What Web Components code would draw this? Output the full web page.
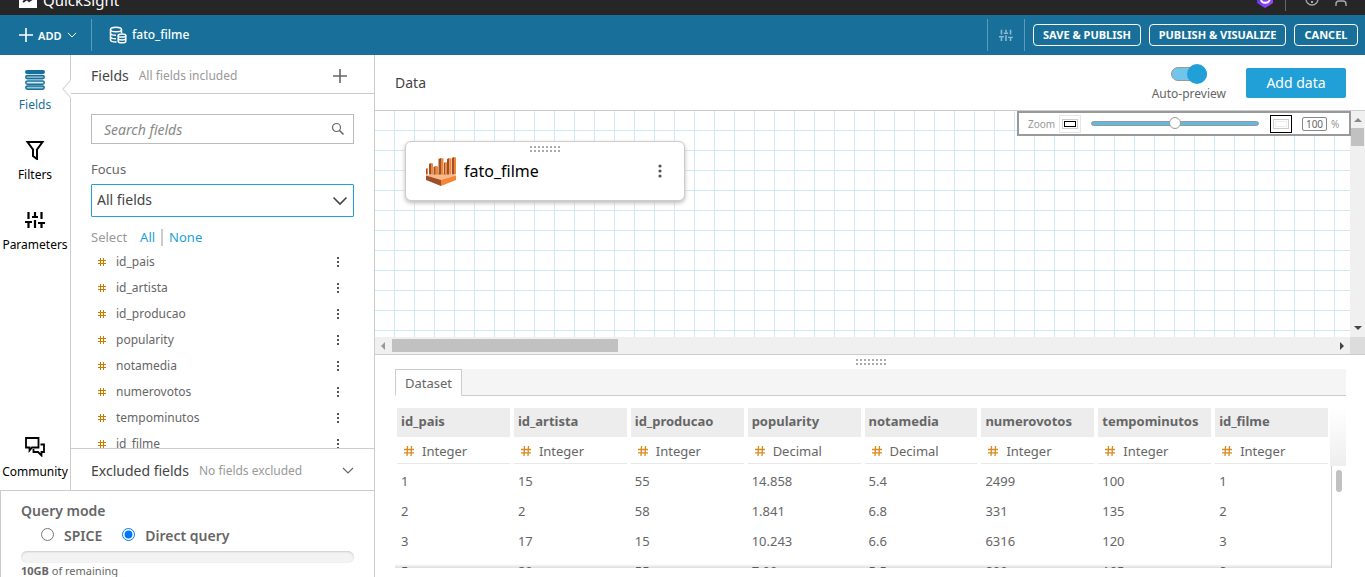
<!DOCTYPE html>
<html lang="en">
<head>
<meta charset="utf-8">
<title>QuickSight - fato_filme</title>
<style>
  html, body { margin: 0; height: 100%; }
  body { font-family: "Noto Sans", "Open Sans", sans-serif; font-size: 13px; color: #666; background: #fff; overflow: hidden; }
</style>
</head>
<body>
<qs-app></qs-app>
<script>
const define = (name, html, setup) => {
  const template = document.createElement('template');
  template.innerHTML = '<style>*{box-sizing:border-box}button,input,select{font:inherit;color:inherit;margin:0}button{background:none;border:0;padding:0;cursor:pointer}</style>' + html;
  customElements.define(name, class extends HTMLElement {
    constructor() {
      super();
      this.attachShadow({ mode: 'open' }).append(template.content.cloneNode(true));
    }
    connectedCallback() {
      if (setup && !this.ready) { this.ready = true; setup(this, this.shadowRoot); }
    }
  });
};

const line = (w, body) => `<g fill="none" stroke="currentColor" stroke-width="${w}">${body}</g>`;
const dots = (() => {
  let s = '';
  for (let r = 0; r < 2; r++) for (let c = 0; c < 8; c++) s += `<rect x="${c * 4}" y="${r * 4}" width="2" height="2"/>`;
  return `<g fill="currentColor">${s}</g>`;
})();
const ICONS = {
  logo: [18, 18, '<rect width="18" height="18" fill="#fff"/><path d="M4 12l4-3 2 2 5-3" fill="none" stroke="#262626" stroke-width="2"/>'],
  hex: [16, 18, '<defs><linearGradient id="g" x1="0" x2="1" y1="0" y2="1"><stop stop-color="#4b2be0"/><stop offset="1" stop-color="#a64dff"/></linearGradient></defs><path d="M8 0 16 4v9l-8 5-8-5V4z" fill="url(#g)"/><path d="M4 9c0 5 8 5 9 0H8" fill="none" stroke="#fff" stroke-width="1.8"/>'],
  help: [14, 14, line(1.3, '<circle cx="7" cy="7" r="6"/>') + '<rect x="6" y="9" width="2" height="2" fill="currentColor"/>'],
  user: [12, 14, line(1.4, '<circle cx="6" cy="4" r="3"/><path d="M1 14v-2q0-3 3-3h4q3 0 3 3v2"/>')],
  plus: [14, 14, line(1.6, '<path d="M7 0v14M0 7h14"/>')],
  chev: [12, 8, line(1.2, '<path d="M1 1l5 5 5-5"/>')],
  chevBig: [16, 10, line(1.6, '<path d="M1.5 1.5 8 8l6.500-6.500"/>')],
  db: [18, 18, line(1.5, '<ellipse cx="7" cy="3.5" rx="5.5" ry="2.3"/><path d="M1.5 3.5V14c0 1 2 2 6 2M1.5 7c0 1.500 2.500 2.300 5.500 2.300M1.500 10.500c0 1.500 2.500 2.300 5.500 2.300M12.500 3.500V7"/><ellipse cx="13" cy="9.500" rx="3.800" ry="1.600"/><path d="M9.200 9.500v5.700c0 2.200 7.600 2.200 7.600 0V9.500M9.200 12.300c0 2.200 7.600 2.200 7.600 0"/>')],
  sliders: [20, 18, line(2.2, '<path d="M3.5 1v7M3.5 12v5M10 1v4M10 9v8M16.5 1v7M16.5 13v4"/><path stroke-width="2" d="M0 11h7M7 6h6M13 12h7"/>')],
  fields: [20, 20, '<rect y="0" width="20" height="4" rx="2" fill="#16709a"/>' + [[5, '#7fb2cb'], [10.5, '#d5e8f0'], [15.5, '#9bc2d6']].map(([y, f]) => `<rect x=".8" y="${y + .5}" width="18.4" height="3.2" rx="1.6" fill="${f}" stroke="#16709a" stroke-width="1.5"/>`).join('')],
  funnel: [20, 20, line(2, '<path d="M2.5 2h15L12 9.5V19l-4-3V9.5z"/>')],
  chat: [20, 20, line(1.8, '<path d="M1 1h12.500v9.500H7L4.500 13.500v-3H1z"/><path d="M15.500 7.500H19V15h-2.500v3.500L13 15H8.500v-3"/>')],
  search: [14, 14, line(1.2, '<circle cx="5.5" cy="5.5" r="4"/><path stroke-width="1.6" d="M8.500 8.500l4 4"/>')],
  hash: [8, 8, line(1, '<path d="M2.5 0v8M5.5 0v8M0 2.5h8M0 5.5h8"/>')],
  hashBig: [10, 10, line(1.3, '<path d="M3.5 0 3 10M7.500 0 7 10M0 3.500h10M0 6.800h10"/>')],
  more: [2, 10, '<g fill="currentColor"><rect width="2" height="2"/><rect y="4" width="2" height="2"/><rect y="8" width="2" height="2"/></g>'],
  moreRound: [4, 14, '<g fill="currentColor"><circle cx="2" cy="2" r="1.600"/><circle cx="2" cy="7" r="1.600"/><circle cx="2" cy="12" r="1.600"/></g>'],
  notch: [9, 18, '<path d="M9 0v18L0 9z" fill="#fff"/>' + line(1.2, '<path d="M8.500 0.500 .8 9l7.700 8.500"/>')],
  grip: [30, 6, dots],
  up: [8, 4, '<path d="M0 4l4-4 4 4z" fill="currentColor"/>'],
  down: [8, 4, '<path d="M0 0l4 4 4-4z" fill="currentColor"/>'],
  left: [4, 8, '<path d="M4 0L0 4l4 4z" fill="currentColor"/>'],
  right: [4, 8, '<path d="M0 0l4 4-4 4z" fill="currentColor"/>'],
  redshift: [30, 29, '<path d="M0 18.500l15-3 15 3-15 5z" fill="#f9b88b"/><path d="M0 18.500l15 4.500v6L0 23z" fill="#9d5025"/><path d="M30 18.500l-15 4.500v6l15-6z" fill="#f58536"/>' +
    [[0, 11, 2], [3, 6, 4], [7.5, 9, 4.5], [12.5, 1, 5], [18, 5, 3], [21, 1, 4.5], [26, 0, 4]].map(([x, y, w]) => `<path d="M${x} ${y + 1}l${w / 2}-1v${17.5 - y}h-${w / 2}z" fill="#9d5025"/><path d="M${x + w / 2} ${y}l${w / 2} .6v${16.9 - y}h-${w / 2}z" fill="#f58536"/>`).join('')]
};

customElements.define('qs-icon', class extends HTMLElement {
  static observedAttributes = ['name'];
  constructor() { super(); this.attachShadow({ mode: 'open' }); }
  attributeChangedCallback() {
    const [w, h, body] = ICONS[this.getAttribute('name')];
    const width = Number(this.getAttribute('size')) || w;
    this.shadowRoot.innerHTML = `<style>:host{display:inline-block;flex:none;line-height:0}svg{display:block}</style><svg width="${width}" height="${width * h / w}" viewBox="0 0 ${w} ${h}" aria-hidden="true">${body}</svg>`;
  }
});

define('qs-masthead', `
<style>
  :host { display: flex; flex: none; height: 15px; overflow: hidden; align-items: flex-end; justify-content: space-between; background: #262626; color: #fff; padding: 0 18px 0 19px; }
  .brand, .tools { display: flex; align-items: flex-end; }
  .brand { gap: 6px; font-size: 15px; line-height: 20px; padding-bottom: 5px; }
  .brand qs-icon { margin-bottom: 2px; }
  .tools { color: #aaa; padding-bottom: 7px; }
  .rule { width: 1px; height: 20px; background: #666; margin: 0 19px -3px 12px; }
  .help { margin-bottom: 2px; }
  .user { margin: 0 0 2px 16px; }
</style>
<div class="brand"><qs-icon name="logo"></qs-icon><span>QuickSight</span></div>
<div class="tools"><qs-icon name="hex"></qs-icon><span class="rule"></span><qs-icon class="help" name="help"></qs-icon><qs-icon class="user" name="user"></qs-icon></div>`);

define('qs-toolbar', `
<style>
  :host { display: flex; flex: none; height: 40px; align-items: center; background: #18709a; color: #fff; padding-right: 7px; }
  .add { display: flex; align-items: center; gap: 5px; padding-left: 19px; width: 91px; font-size: 11px; font-weight: 600; }
  .rule { width: 1px; height: 32px; background: #5b9cba; }
  .name { display: flex; align-items: center; gap: 5px; margin-left: 17px; font-size: 12px; font-weight: 500; line-height: 20px; flex: 1; }
  .set { width: 36px; display: grid; place-items: center; color: #8fbbd0; height: 32px; }
  .actions { display: flex; gap: 8px; margin-left: 8px; }
  .actions button { height: 22px; border: 1px solid #fff; border-radius: 4px; font-size: 11px; line-height: 20px; font-weight: 700; text-align: center; white-space: nowrap; }
  .a { width: 108px; } .b { width: 137px; } .c { width: 64px; }
</style>
<button class="add"><qs-icon name="plus"></qs-icon><span>ADD</span><qs-icon name="chev" size="10"></qs-icon></button>
<span class="rule"></span>
<div class="name"><qs-icon name="db"></qs-icon><span>fato_filme</span></div>
<span class="rule"></span>
<button class="set" aria-label="Settings"><qs-icon name="sliders" size="14"></qs-icon></button>
<span class="rule"></span>
<div class="actions"><button class="a">SAVE &amp; PUBLISH</button><button class="b">PUBLISH &amp; VISUALIZE</button><button class="c">CANCEL</button></div>`);

define('qs-rail-item', `
<style>
  :host { display: block; color: #000; }
  :host([active]) { color: #18709a; }
  button { display: flex; flex-direction: column; align-items: center; gap: 5px; width: 100%; padding-top: 15px; font-size: 12px; line-height: 20px; }
  .glyph { display: grid; place-items: center; width: 20px; height: 20px; }
</style>
<button><span class="glyph"></span><slot></slot></button>`, (host, root) => {
  const icon = document.createElement('qs-icon');
  icon.setAttribute('name', host.getAttribute('icon'));
  root.querySelector('.glyph').append(icon);
});

define('qs-rail', `
<style>
  :host { display: flex; flex-direction: column; gap: 10px; width: 71px; flex: none; border-right: 1px solid #ccc; padding-bottom: 8px; position: relative; }
  .last { margin-top: auto; }
  .notch { position: absolute; right: -1px; top: 25px; color: #ddd; }
</style>
<qs-rail-item icon="fields" active>Fields</qs-rail-item>
<qs-rail-item icon="funnel">Filters</qs-rail-item>
<qs-rail-item icon="sliders">Parameters</qs-rail-item>
<qs-rail-item icon="chat" class="last">Community</qs-rail-item>
<qs-icon class="notch" name="notch"></qs-icon>`);

define('qs-field', `
<style>
  :host { display: flex; align-items: center; height: 26px; padding: 0 15px 0 7px; font-size: 12px; line-height: 20px; }
  .hash { color: #cc7a00; margin-right: 10px; }
  .label { flex: 1; }
  button { color: #555; display: flex; }
</style>
<qs-icon class="hash" name="hash"></qs-icon><span class="label"><slot></slot></span><button aria-label="Field menu"><qs-icon name="more"></qs-icon></button>`);

define('qs-fields-panel', `
<style>
  :host { display: flex; flex-direction: column; flex: 1; min-width: 0; }
  .head { display: flex; align-items: center; height: 39px; border-bottom: 1px solid #ccc; padding: 4px 27px 0 20px; color: #444; font-size: 14px; line-height: 20px; flex: none; }
  .note { font-size: 12px; color: #999; margin-left: 10px; flex: 1; }
  .head button, .foot button { color: #666; display: flex; }
  .body { flex: 1; min-height: 0; overflow: hidden; padding: 20px 20px 0; display: flex; flex-direction: column; }
  .search { display: flex; align-items: center; height: 30px; border: 1px solid #bbb; padding: 0 8px 0 12px; flex: none; font-size: 14px; }
  .search input { border: 0; outline: 0; flex: 1; min-width: 0; padding: 0; background: none; }
  .search input::placeholder { font-style: italic; color: #888; opacity: 1; }
  label.focus { margin-top: 15px; line-height: 20px; font-size: 13px; flex: none; }
  .pick { display: grid; align-items: center; margin-top: 5px; flex: none; color: #444; }
  .pick > * { grid-area: 1 / 1; }
  .pick qs-icon { justify-self: end; margin-right: 6px; pointer-events: none; }
  select { appearance: none; height: 33px; width: 100%; border: 1px solid #219fd7; border-radius: 1px; background: #fff; padding: 0 5px 2px; font-size: 14px; }
  .sel { display: flex; align-items: center; margin: 10px 0 2px; line-height: 20px; color: #999; font-size: 13px; flex: none; }
  a { color: #219fd7; text-decoration: none; }
  .sel a:first-of-type { margin-left: 13px; }
  .bar { width: 2px; height: 17px; background: #ccc; margin: 0 6px; }
  .foot { display: flex; align-items: center; height: 42px; border-top: 1px solid #ccc; padding: 2px 20px 0 20px; color: #444; font-size: 14px; line-height: 20px; flex: none; }
</style>
<div class="head"><span>Fields</span><span class="note">All fields included</span><button aria-label="Add field"><qs-icon name="plus"></qs-icon></button></div>
<div class="body">
  <div class="search"><input type="text" placeholder="Search fields" aria-label="Search fields"><qs-icon name="search"></qs-icon></div>
  <label class="focus" for="f">Focus</label>
  <div class="pick"><select id="f"><option>All fields</option></select><qs-icon name="chevBig"></qs-icon></div>
  <div class="sel"><span>Select</span><a href="#all">All</a><span class="bar"></span><a href="#none">None</a></div>
  <div class="list"></div>
</div>
<div class="foot"><span>Excluded fields</span><span class="note">No fields excluded</span><button aria-label="Expand"><qs-icon name="chev"></qs-icon></button></div>`, (host, root) => {
  for (const name of FIELDS) {
    const el = document.createElement('qs-field');
    el.textContent = name;
    root.querySelector('.list').append(el);
  }
});

define('qs-query-mode', `
<style>
  :host { display: block; flex: 0 0 87px; overflow: hidden; border: solid #ccc; border-width: 1px 0 0 1px; padding: 10px 20px 0; font-weight: 600; font-size: 14px; line-height: 20px; }
  .row { display: flex; align-items: center; height: 28px; padding: 2px 0 0 20px; }
  input { width: 13px; height: 13px; accent-color: #0075ff; flex: none; margin: 0 10px 4px 0; }
  label { margin-right: 20px; }
  .meter { height: 12px; border-radius: 6px; background: #f3f3f3; box-shadow: inset 0 1px 2px #ccc; margin-top: 2px; }
  .left { font-size: 11px; line-height: 16px; font-weight: 400; }
  b { font-weight: 700; }
</style>
<div>Query mode</div>
<div class="row"><input type="radio" name="m" id="s"><label for="s">SPICE</label><input type="radio" name="m" id="d" checked><label for="d">Direct query</label></div>
<div class="meter" role="progressbar" aria-label="Capacity"></div>
<div class="left"><b>10GB</b> of remaining</div>`);

define('qs-zoom', `
<style>
  :host { display: flex; align-items: center; height: 25px; width: 334px; border: 2px solid #999; background: #fff; color: #999; font-size: 10px; padding-left: 9px; }
  label { width: 31px; }
  .box { width: 22px; height: 18px; display: grid; place-items: center; border: 1px solid #e8e8e8; flex: none; }
  .box span { width: 12px; height: 6px; border: 1px solid #000; box-shadow: 0 0 0 1px #fff, 0 0 0 2px #ccc; }
  .box.on { border-color: #000; }
  .box.on span { border-color: #eee; }
  .slide { appearance: none; width: 168px; height: 14px; margin: 0 11px 0 10px; background: none; flex: none; }
  .slide::-webkit-slider-runnable-track { height: 5px; border-radius: 3px; background: #63b8e2; border: 1px solid #999; }
  .slide::-webkit-slider-thumb { appearance: none; width: 12px; height: 12px; margin-top: -5px; border-radius: 6px; border: 1px solid #999; background: #fff; }
  .num { width: 25px; height: 14px; border: 1px solid #888; border-radius: 2px; padding: 0; text-align: center; color: #666; margin: 0 4px 0 10px; }
</style>
<label for="z">Zoom</label><button class="box" aria-label="Zoom out"><span></span></button><input class="slide" id="z" type="range" min="0" max="200" value="100"><button class="box on" aria-label="Zoom in"><span></span></button><input class="num" type="text" value="100" aria-label="Zoom percent"><span>%</span>`);

define('qs-node', `
<style>
  :host { display: flex; align-items: center; width: 280px; height: 60px; border: 1px solid #ccc; border-radius: 6px; background: #fff; box-shadow: 0 2px 4px #bbb; padding: 0 22px 0 20px; color: #000; font-size: 16px; line-height: 20px; }
  .name { flex: 1; margin-left: 8px; }
  .grip { position: absolute; left: 124px; top: 4px; color: #aaa; }
  button { color: #555; display: flex; }
</style>
<qs-icon class="grip" name="grip"></qs-icon><qs-icon name="redshift"></qs-icon><span class="name"><slot></slot></span><button aria-label="Table menu"><qs-icon name="moreRound"></qs-icon></button>`);

define('qs-canvas', `
<style>
  :host { display: grid; grid-template: 226px 17px / 1fr 15px; flex: none; position: relative; border-bottom: 1px solid #ccc; }
  .grid { background: linear-gradient(to right, transparent 19px, #cfe9f5 19px) 0 0 / 20px 20px, linear-gradient(transparent 19px, #cfe9f5 19px) 0 0 / 20px 20px; position: relative; overflow: hidden; }
  qs-node { position: absolute; left: 30px; top: 30px; }
  qs-zoom { position: absolute; right: 14px; top: 0; }
  .v { background: #f0f0f0; display: flex; flex-direction: column; align-items: center; padding: 7px 0; color: #888; }
  .v i { width: 13px; height: 18px; background: #c1c1c1; margin-top: 6px; }
  .v .end, .h .end { color: #444; margin-top: auto; }
  .h { background: #f0f0f0; display: flex; align-items: center; padding: 0 6px; color: #999; }
  .h i { width: 226px; height: 13px; background: #c1c1c1; margin-left: 7px; }
  .h .end { margin: 0 0 0 auto; }
  .corner { background: #dcdcdc; }
</style>
<div class="grid"><qs-node>fato_filme</qs-node></div>
<div class="v"><qs-icon name="up"></qs-icon><i></i><qs-icon class="end" name="down"></qs-icon></div>
<div class="h"><qs-icon name="left"></qs-icon><i></i><qs-icon class="end" name="right"></qs-icon></div>
<div class="corner"></div>
<qs-zoom></qs-zoom>`);

define('qs-data-header', `
<style>
  :host { display: flex; align-items: center; height: 56px; flex: none; border-bottom: 1px solid #ccc; padding: 0 19px 0 20px; color: #444; font-size: 14px; }
  .t { flex: 1; }
  label { display: flex; flex-direction: column; align-items: center; gap: 1px; font-size: 12px; line-height: 18px; color: #666; margin-right: 20px; padding-top: 2px; }
  input { appearance: none; width: 36px; height: 14px; border: 1px solid #999; border-radius: 7px; background: #72c5ea; display: flex; justify-content: flex-end; align-items: center; margin: 3px 0; }
  input::after { content: ""; flex: none; width: 20px; height: 20px; border-radius: 10px; background: #219fd7; margin-right: -1px; }
  button { width: 100px; height: 30px; border-radius: 2px; background: #219fd7; color: #fff; font-size: 14px; }
</style>
<span class="t">Data</span><label><input type="checkbox" role="switch" checked>Auto-preview</label><button>Add data</button>`);

define('qs-dataset', `
<style>
  :host { display: flex; flex-direction: column; flex: 1; min-height: 0; padding: 4px 19px 9px 20px; }
  .grip { align-self: center; color: #aaa; margin-bottom: 4px; }
  .tabs { display: flex; height: 27px; background: #f5f5f5; border-bottom: 1px solid #ccc; flex: none; }
  .tabs button { height: 27px; width: 67px; border: 1px solid #ccc; border-bottom-color: #fff; background: #fff; font-size: 13px; }
  .wrap { display: flex; flex: 1; min-height: 0; margin-top: 12px; position: relative; overflow: hidden; }
  .scroll { flex: 1; min-width: 0; }
  table { border-spacing: 0; table-layout: fixed; width: 100%; font-size: 13px; }
  th, td { border: solid #fff; border-width: 0 2px; background-clip: padding-box; padding: 0 4px; text-align: left; height: 30px; line-height: 20px; white-space: nowrap; }
  thead th { background-color: #ededed; height: 29px; font-weight: 700; padding-bottom: 3px; }
  .type td { height: 29px; padding: 0; }
  .type div { display: flex; align-items: center; gap: 8px; height: 27px; padding: 2px 7px 0; border-bottom: 1px solid #e8e8e8; margin-bottom: 2px; }
  .type qs-icon { color: #d98a1f; }
  .side { width: 16px; display: flex; flex-direction: column; }
  .side .top { height: 58px; background: linear-gradient(#fff, #eee); flex: none; }
  .side .track { flex: 1; border-left: 1px solid #ccc; margin-left: 1px; padding: 4px 0 0 4px; }
  .side i { display: block; width: 6px; height: 22px; border-radius: 3px; background: #c1c1c1; }
  .shade { position: absolute; left: 0; right: 15px; bottom: 0; height: 4px; background: linear-gradient(#0000, #0002); }
</style>
<qs-icon class="grip" name="grip"></qs-icon>
<div class="tabs"><button>Dataset</button></div>
<div class="wrap"><div class="scroll"><table><thead><tr></tr></thead><tbody><tr class="type"></tr></tbody></table></div>
<div class="side"><div class="top"></div><div class="track"><i></i></div></div><div class="shade"></div></div>`, (host, root) => {
  root.querySelector('thead tr').innerHTML = FIELDS.map(f => `<th scope="col">${f}</th>`).join('');
  root.querySelector('.type').innerHTML = FIELDS.map((f, i) => `<td><div><qs-icon name="hashBig"></qs-icon>${i === 3 || i === 4 ? 'Decimal' : 'Integer'}</div></td>`).join('');
  root.querySelector('tbody').insertAdjacentHTML('beforeend', ROWS.map(r => '<tr>' + r.map(v => `<td>${v}</td>`).join('') + '</tr>').join(''));
});

const FIELDS = ['id_pais', 'id_artista', 'id_producao', 'popularity', 'notamedia', 'numerovotos', 'tempominutos', 'id_filme'];
const ROWS = [
  ['1', '15', '55', '14.858', '5.4', '2499', '100', '1'],
  ['2', '2', '58', '1.841', '6.8', '331', '135', '2'],
  ['3', '17', '15', '10.243', '6.6', '6316', '120', '3'],
  ['5', '20', '55', '7.90', '5.5', '800', '105', '8']
];

define('qs-app', `
<style>
  :host { display: flex; flex-direction: column; height: 100vh; overflow: hidden; }
  .page { display: flex; flex: 1; min-height: 0; }
  aside { width: 375px; flex: none; display: flex; flex-direction: column; border-right: 1px solid #ccc; }
  .top { display: flex; flex: 1; min-height: 0; }
  main { flex: 1; min-width: 0; display: flex; flex-direction: column; }
</style>
<qs-masthead></qs-masthead>
<qs-toolbar></qs-toolbar>
<div class="page">
  <aside><div class="top"><qs-rail></qs-rail><qs-fields-panel></qs-fields-panel></div><qs-query-mode></qs-query-mode></aside>
  <main><qs-data-header></qs-data-header><qs-canvas></qs-canvas><qs-dataset></qs-dataset></main>
</div>`);
</script>
</body>
</html>
